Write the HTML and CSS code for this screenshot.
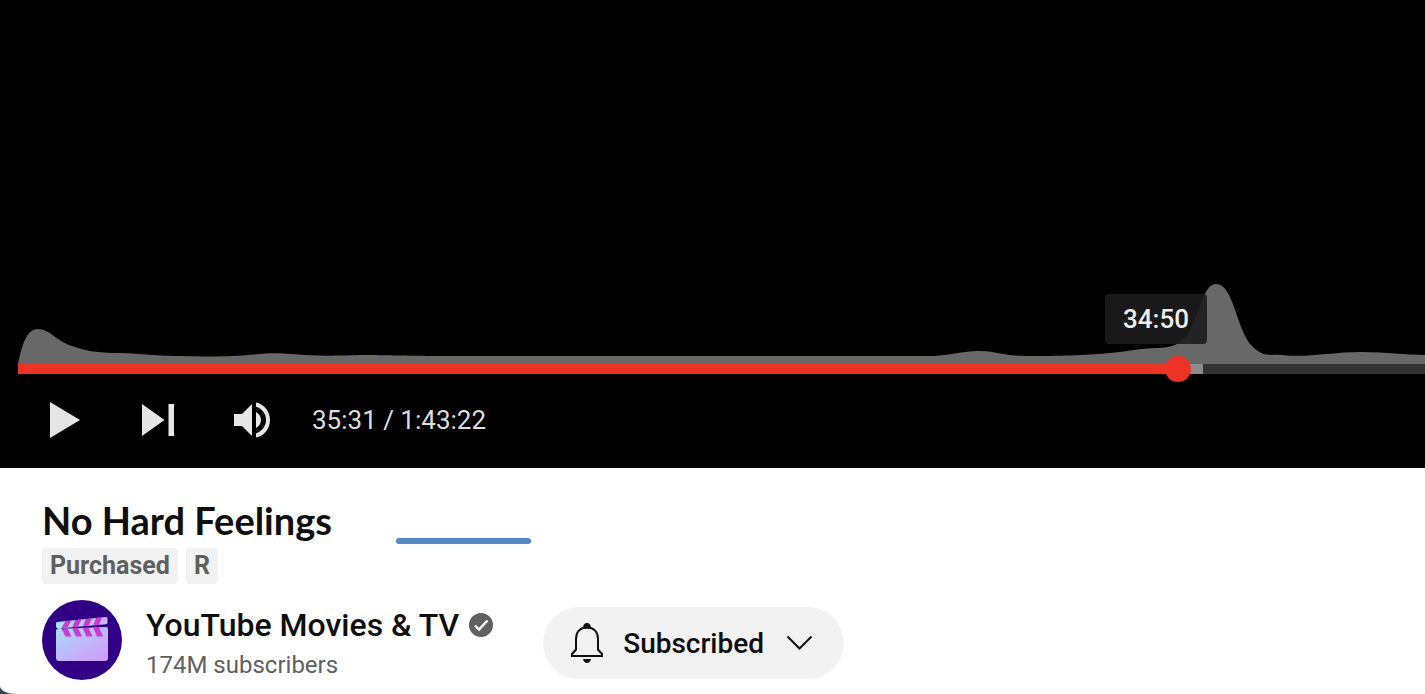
FILE: index.html
```html
<!DOCTYPE html>
<html lang="en">
<head>
    <meta charset="UTF-8">
    <meta name="viewport" content="width=device-width, initial-scale=1.0">
    <title>No Hard Feelings</title>
    <link rel="stylesheet" href="styles.css">
</head>
<body>
    <div class="page">
        <section class="player">
            <div class="progress">
                <!-- most replayed graph -->
                <svg class="heatmap" viewBox="0 0 1407 80" preserveAspectRatio="none" aria-hidden="true">
                    <path d="M0 80 C4 62 8 45 20 45 C32 45 38 57 54 62 C68 67 80 69 100 69 C120 69 134 72 162 72 C200 73 218 72 232 71 C250 69 258 69 274 70 C296 72 310 72 342 71 C370 71 390 72 430 72 H900 C930 73 942 67 962 67 C978 67 984 72 1010 72 C1050 72 1072 71 1092 69 C1112 67 1126 64 1138 64 C1156 64 1164 59 1172 46 C1182 27 1186 0 1198 0 C1216 0 1218 46 1234 62 C1246 74 1252 70 1264 71 C1290 74 1312 68 1344 68 C1370 68 1386 71 1407 71 V80 Z"/>
                </svg>
                <input class="seek" type="range" min="0" max="2566" value="2131" aria-label="Seek slider">
                <div class="tooltip">34:50</div>
            </div>
            <div class="controls">
                <button class="control" aria-label="Play">
                    <svg viewBox="0 0 92 92"><path d="M32 28L62 46L32 64z"/></svg>
                </button>
                <button class="control" aria-label="Next">
                    <svg viewBox="0 0 92 92"><path d="M32 30L54.500 46L32 62zM58.500 30H64V62H58.500z"/></svg>
                </button>
                <button class="control" aria-label="Mute">
                    <svg viewBox="0 0 92 92"><path d="M32 40H40L50 30V62L40 52H32zM54 38C57 39.500 59 42.500 59 46S57 52.500 54 54zM54 28.400C62 30 68 37 68 46S62 62 54 63.600V59.200C60 57.500 64 52 64 46S60 34.500 54 32.800z"/></svg>
                </button>
                <div class="time">35:31 / 1:43:22</div>
            </div>
        </section>

        <main class="info">
            <div class="title-row">
                <h1>No Hard Feelings</h1>
                <span class="marker"></span>
            </div>
            <div class="tags">
                <span class="tag">Purchased</span>
                <span class="tag">R</span>
            </div>
            <div class="channel">
                <svg class="avatar" viewBox="0 0 80 80" aria-hidden="true">
                    <defs>
                        <linearGradient id="clapper" x1="0" y1="0" x2="1" y2="1">
                            <stop offset="0" stop-color="#a8dcf5"/>
                            <stop offset="0.500" stop-color="#c0b8fa"/>
                            <stop offset="1" stop-color="#cf9af8"/>
                        </linearGradient>
                        <linearGradient id="arm" x1="0" y1="0" x2="1" y2="0">
                            <stop offset="0" stop-color="#a5e4f3"/>
                            <stop offset="1" stop-color="#c8b4fa"/>
                        </linearGradient>
                    </defs>
                    <circle cx="40" cy="40" r="40" fill="#310085"/>
                    <path fill="url(#arm)" d="M15 22L64 17Q65.500 17 65.500 18.500V22.500Q65.500 24 64 24.200L19 28.200V30H17L14 27V23.500Q14 22 15 22z"/>
                    <path fill="url(#clapper)" d="M14 29.500L20 28.700L64 27Q66 27 66 29V58Q66 61 63 61H17Q14 61 14 58z"/>
                    <path fill="#c93bd3" d="M23.500 21L29.500 20.500L25.500 27.600L19.500 28.100zM33.500 20L39.500 19.500L36 26.700L30.200 27.200zM44 19L50 18.500L46.500 25.800L40.800 26.300zM54 18L60 17.500L57 24.900L51.200 25.400zM19.500 28.700L25.500 28.500L29.500 36.500H23.500zM30.200 28.300L36 28.100L40 36.500H34zM40.800 27.900L46.500 27.700L50.500 36.500H44.500zM51.200 27.500L57 27.300L61 36.500H55z"/>
                </svg>
                <div class="channel-text">
                    <a class="channel-name" href="#">YouTube Movies &amp; TV
                        <svg class="verified" viewBox="0 0 24 24" aria-hidden="true">
                            <circle cx="12" cy="12" r="12" fill="#606060"/>
                            <path d="M6 12.500L10 16.500L18.500 7.500" fill="none" stroke="#fff" stroke-width="2.400"/>
                        </svg>
                    </a>
                    <div class="subscribers">174M subscribers</div>
                </div>
                <button class="subscribe">
                    <svg viewBox="0 0 48 48" aria-hidden="true">
                        <path d="M20 9.500Q20 4 24 4T28 9.500zM20 40H28Q27 44 24 44T20 40z"/>
                        <path class="line" d="M24 8.500C17 8.500 13 13 13 20V30.500L9 35V37H39V35L35 30.500V20C35 13 31 8.500 24 8.500z"/>
                    </svg>
                    <span>Subscribed</span>
                    <svg viewBox="0 0 48 48" aria-hidden="true">
                        <path class="line" d="M11.500 17.500L23.500 29.500L35.500 17.500"/>
                    </svg>
                </button>
            </div>
        </main>
    </div>
</body>
</html>
```

FILE: styles.css
```css
* {
    box-sizing: border-box;
}
body {
    margin: 0;
    background: #34475a;
    font-family: Roboto, "Liberation Sans", sans-serif;
    color: #0f0f0f;
}
button {
    padding: 0;
    border: none;
    font-family: inherit;
    cursor: pointer;
}
.page {
    min-height: 100vh;
    background: #fff;
    border-radius: 0 0 0 16px / 0 0 0 8px;
    overflow: hidden;
}

/* player */
.player {
    padding: 284px 0 2px 18px;
    background: #000;
}
.progress {
    position: relative;
}
.heatmap {
    display: block;
    width: 100%;
    height: 80px;
    fill: #686868;
}
.seek {
    display: block;
    appearance: none;
    width: 100%;
    height: 10px;
    margin: 0;
    background: linear-gradient(to right, #ed3323 82%, #8c8c8c 82%, #8c8c8c 84.200%, #333 84.200%);
}
.seek::-webkit-slider-thumb {
    appearance: none;
    width: 26px;
    height: 26px;
    border-radius: 50%;
    background: #ed3323;
}
.tooltip {
    position: absolute;
    top: 10px;
    right: 218px;
    padding: 0 18px;
    border-radius: 4px;
    background: rgba(28, 28, 28, 0.9);
    color: #eee;
    font-size: 26px;
    font-weight: 500;
    line-height: 50px;
}
.controls {
    display: flex;
    align-items: center;
}
.control {
    width: 92px;
    height: 92px;
    background: none;
}
.control svg {
    display: block;
    fill: #e6e6e6;
}
.time {
    padding-left: 18px;
    color: #ddd;
    font-size: 26px;
}

/* video info */
.info {
    padding: 32px 42px 14px;
}
.title-row {
    display: flex;
    align-items: flex-end;
    gap: 64px;
}
h1 {
    margin: 0 0 4px;
    font-family: Lato, Roboto, sans-serif;
    font-size: 38px;
    font-weight: 700;
    line-height: 40px;
}
.marker {
    width: 135px;
    height: 6px;
    border-radius: 3px;
    background: #5488c7;
}
.tags {
    display: flex;
    gap: 8px;
    margin: 4px 0 16px;
}
.tag {
    padding: 0 8px;
    border-radius: 4px;
    background: #f2f2f2;
    color: #606060;
    font-size: 25px;
    font-weight: 700;
    line-height: 36px;
}
.channel {
    display: flex;
    align-items: flex-start;
}
.avatar {
    width: 80px;
    height: 80px;
    margin-right: 24px;
}
.channel-name {
    display: flex;
    align-items: center;
    gap: 10px;
    color: inherit;
    font-size: 32px;
    font-weight: 500;
    line-height: 50px;
    text-decoration: none;
}
.verified {
    width: 24px;
    height: 24px;
}
.subscribers {
    color: #606060;
    font-size: 24px;
    line-height: 30px;
}
.subscribe {
    display: flex;
    align-items: center;
    gap: 12px;
    height: 72px;
    margin: 7px 0 0 50px;
    padding: 0 20px;
    border-radius: 36px;
    background: #f2f2f2;
    color: #0f0f0f;
    font-size: 28px;
    font-weight: 500;
}
.subscribe svg {
    width: 48px;
    height: 48px;
    fill: #0f0f0f;
}
.subscribe .line {
    fill: none;
    stroke: #0f0f0f;
    stroke-width: 2;
}
```
